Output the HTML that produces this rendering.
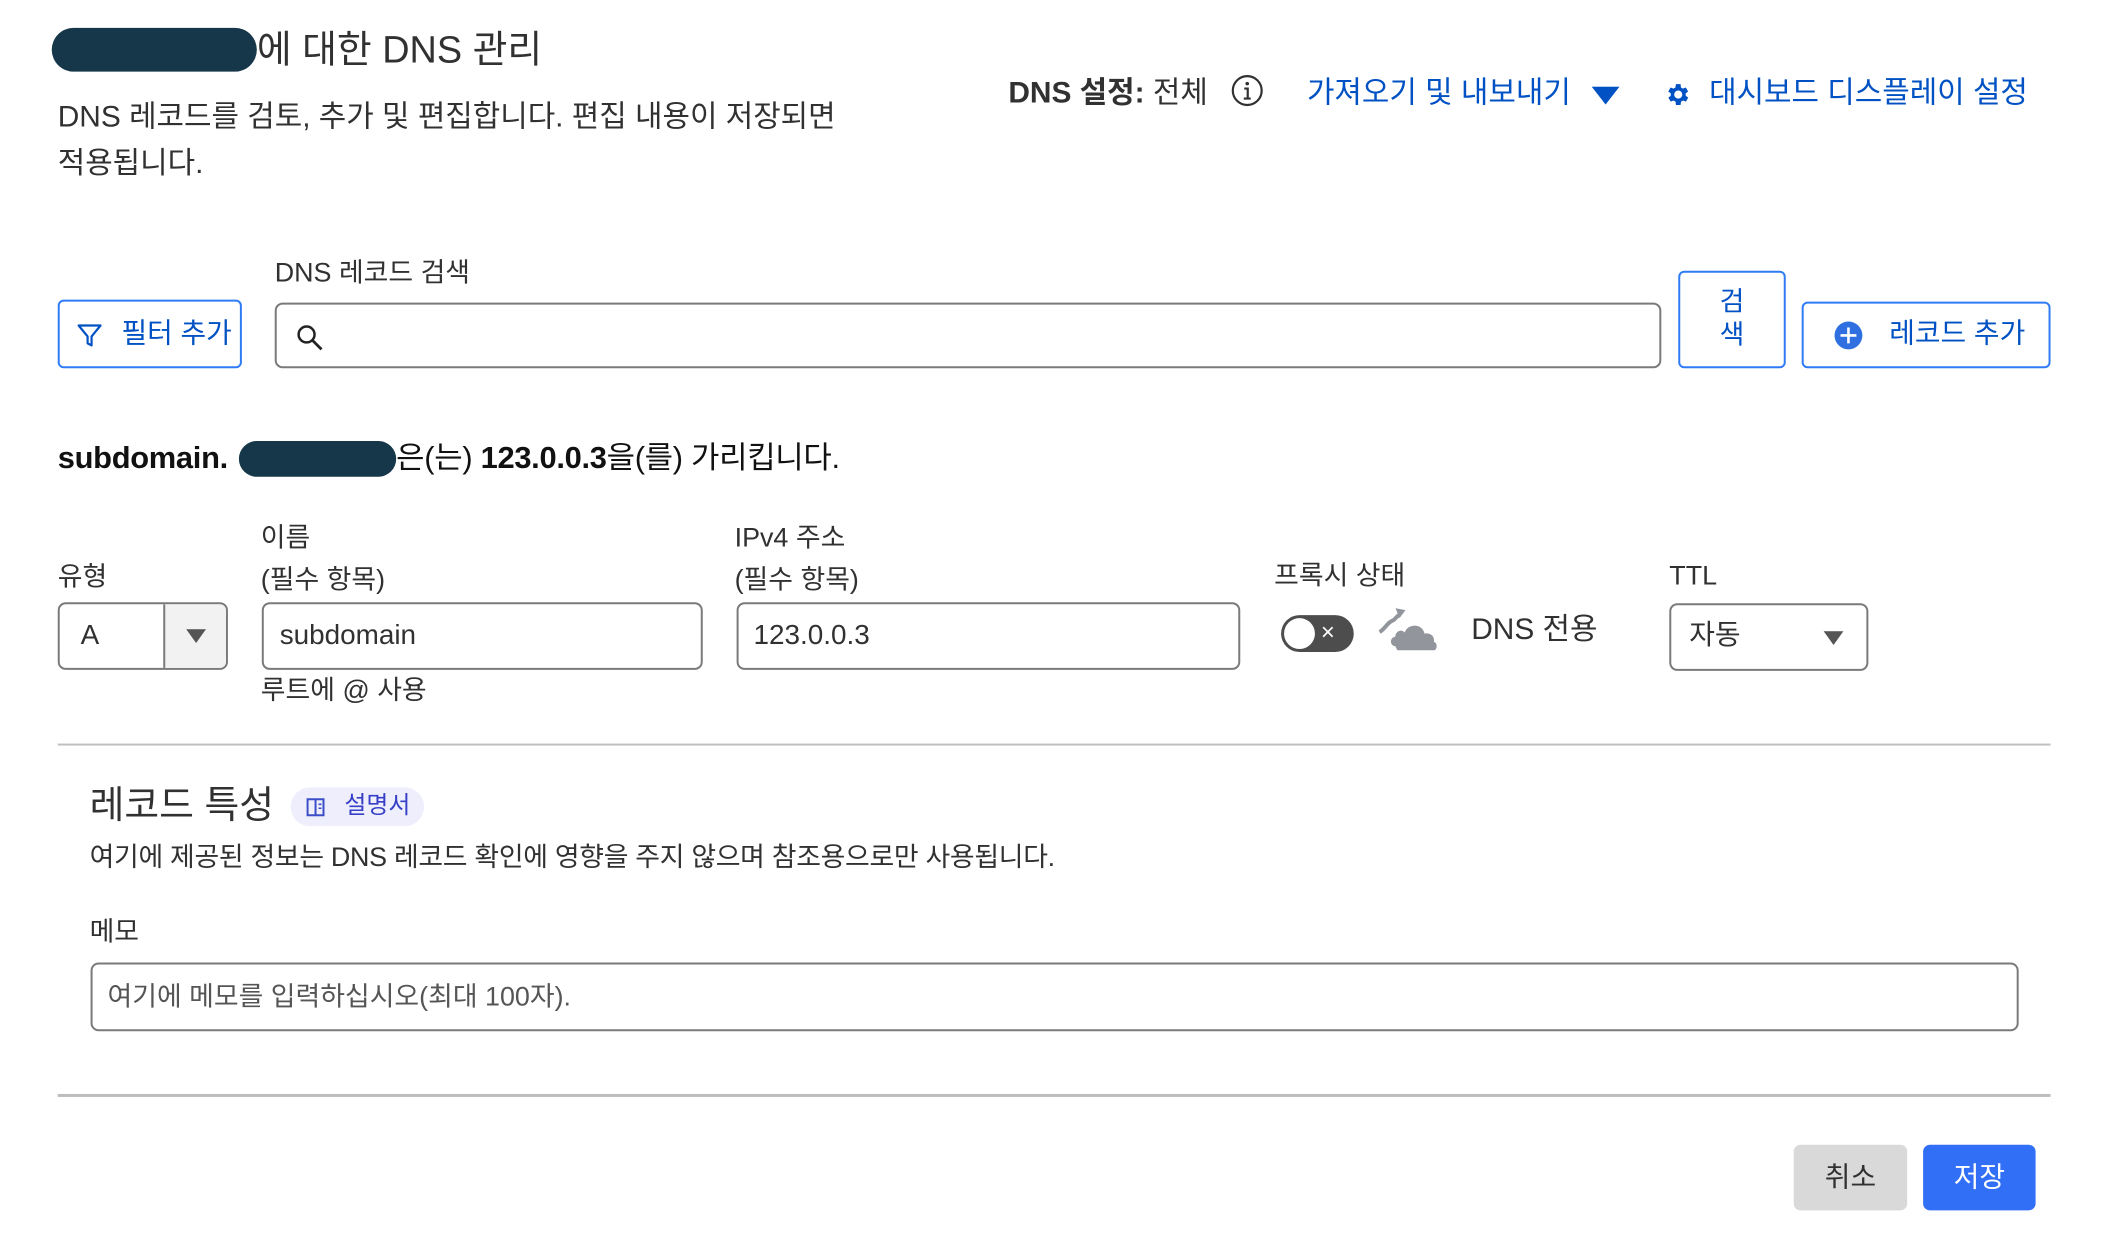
<!DOCTYPE html>
<html><head><meta charset="utf-8"><style>
*{box-sizing:border-box;margin:0;padding:0}
body{width:2106px;height:1238px;background:#fff;position:relative;overflow:hidden;font-family:"Liberation Sans","Noto Sans CJK KR",sans-serif;color:#313131}
#w{position:absolute;left:0;top:0;width:2106px;height:1238px;transform:scale(0.9954);transform-origin:0 0}
.a{position:absolute;white-space:nowrap}
.blue{color:#0051c3}
.box{position:absolute;border:2px solid #7a7a7a;border-radius:8px;background:#fff}
.bbtn{position:absolute;border:2px solid #2f7bf5;border-radius:6px;color:#0051c3;background:#fff}
.pill{position:absolute;background:#163749;border-radius:22px}
</style></head><body><div id="w">

<div class="pill" style="left:52px;top:28px;width:206px;height:44px"></div>
<div class="a" style="left:258px;top:27px;font-size:38px;line-height:48px">에 대한 DNS 관리</div>
<div class="a" style="left:58px;top:94px;font-size:30px;line-height:47px">DNS 레코드를 검토, 추가 및 편집합니다. 편집 내용이 저장되면<br>적용됩니다.</div>

<div class="a" style="left:1013px;top:75px;font-size:30px;line-height:38px"><b>DNS 설정:</b> 전체</div>
<svg class="a" style="left:1236px;top:74px" width="34" height="34" viewBox="0 0 34 34"><circle cx="17" cy="17" r="14.5" fill="none" stroke="#313131" stroke-width="2.2"/><circle cx="17" cy="10" r="1.8" fill="#313131"/><path d="M14 15h3.5v10M13.5 25h7" stroke="#313131" stroke-width="2.2" fill="none"/></svg>
<div class="a blue" style="left:1313px;top:75px;font-size:30px;line-height:38px">가져오기 및 내보내기</div>
<svg class="a" style="left:1599px;top:87px" width="28" height="18"><path d="M0 0h28L14 18z" fill="#0051c3"/></svg>
<svg class="a" style="left:1672px;top:81px" width="28" height="28" viewBox="0 0 24 24"><path fill="#0051c3" d="M19.4 13a7.5 7.5 0 000-2l2.1-1.6-2-3.5-2.5 1a7 7 0 00-1.7-1L15 3h-4l-.4 2.9a7 7 0 00-1.7 1l-2.5-1-2 3.5L6.6 11a7.5 7.5 0 000 2l-2.1 1.6 2 3.5 2.5-1a7 7 0 001.7 1L11 21h4l.4-2.9a7 7 0 001.7-1l2.5 1 2-3.5zM13 15.5a3.5 3.5 0 110-7 3.5 3.5 0 010 7z" transform="translate(-1 0)"/></svg>
<div class="a blue" style="left:1717px;top:75px;font-size:30px;line-height:38px">대시보드 디스플레이 설정</div>

<div class="a" style="left:276px;top:257px;font-size:27px;line-height:34px">DNS 레코드 검색</div>
<div class="bbtn" style="left:58px;top:301px;width:185px;height:69px"></div>
<svg class="a" style="left:76px;top:323px" width="28" height="28" viewBox="0 0 28 28"><path d="M3 4h22l-9 11v9l-4-2v-7z" fill="none" stroke="#0051c3" stroke-width="2.2" stroke-linejoin="round"/></svg>
<div class="a blue" style="left:122px;top:317px;font-size:28px;line-height:36px">필터 추가</div>
<div class="box" style="left:276px;top:304px;width:1393px;height:66px"></div>
<svg class="a" style="left:296px;top:324px" width="32" height="32" viewBox="0 0 32 32"><circle cx="12" cy="12" r="8" fill="none" stroke="#222" stroke-width="2.5"/><path d="M18 18l9 9" stroke="#222" stroke-width="2.8"/></svg>
<div class="bbtn" style="left:1686px;top:272px;width:108px;height:98px"></div>
<div class="a blue" style="left:1686px;top:287px;width:108px;text-align:center;font-size:27px;line-height:33px">검<br>색</div>
<div class="bbtn" style="left:1810px;top:303px;width:250px;height:67px"></div>
<svg class="a" style="left:1842px;top:322px" width="30" height="30" viewBox="0 0 30 30"><circle cx="15" cy="15" r="14" fill="#2f6fe0"/><path d="M15 7v16M7 15h16" stroke="#fff" stroke-width="2.6"/></svg>
<div class="a blue" style="left:1898px;top:317px;font-size:28px;line-height:36px">레코드 추가</div>

<div class="a" style="left:58px;top:440px;font-size:31px;line-height:40px;color:#111;letter-spacing:-0.3px"><b>subdomain.</b></div>
<div class="pill" style="left:240px;top:443px;width:158px;height:36px"></div>
<div class="a" style="left:398px;top:440px;font-size:31px;line-height:40px;color:#111;letter-spacing:-0.3px">은(는) <b>123.0.0.3</b>을(를) 가리킵니다.</div>

<div class="a" style="left:58px;top:562px;font-size:27px;line-height:34px">유형</div>
<div class="a" style="left:262px;top:519px;font-size:27px;line-height:42px">이름<br>(필수 항목)</div>
<div class="a" style="left:738px;top:519px;font-size:27px;line-height:42px">IPv4 주소<br>(필수 항목)</div>
<div class="a" style="left:1280px;top:561px;font-size:27px;line-height:34px">프록시 상태</div>
<div class="a" style="left:1677px;top:561px;font-size:27px;line-height:34px">TTL</div>

<div class="box" style="left:58px;top:605px;width:171px;height:68px;overflow:hidden"><div style="position:absolute;left:104px;top:0;width:65px;height:66px;background:#f2f2f2;border-left:2px solid #7a7a7a"></div></div>
<div class="a" style="left:81px;top:620px;font-size:28px;line-height:36px">A</div>
<svg class="a" style="left:187px;top:632px" width="20" height="14"><path d="M0 0h20L10 14z" fill="#555"/></svg>
<div class="box" style="left:263px;top:605px;width:443px;height:68px"></div>
<div class="a" style="left:281px;top:620px;font-size:28px;line-height:36px">subdomain</div>
<div class="a" style="left:262px;top:676px;font-size:27px;line-height:34px">루트에 @ 사용</div>
<div class="box" style="left:740px;top:605px;width:506px;height:68px"></div>
<div class="a" style="left:757px;top:620px;font-size:28px;line-height:36px">123.0.0.3</div>

<div class="a" style="left:1287px;top:618px;width:73px;height:37px;border-radius:19px;background:#4d4d4d"></div>
<div class="a" style="left:1290px;top:621px;width:31px;height:31px;border-radius:50%;background:#fff"></div>
<div class="a" style="left:1327px;top:618px;font-size:24px;line-height:36px;color:#fff">×</div>
<svg class="a" style="left:1384px;top:607px" width="70" height="50" viewBox="0 0 70 50"><path d="M14 42c-5 0-6-8 0-9 0-5 6-8 9-4 3-9 17-9 19 1 6-1 10 3 9 8 4 1 3 8 0 8H16z" fill="#92969c" transform="translate(3 -2) scale(1.05)"/><path d="M2 28c6-4 8-10 14-12l6-6" fill="none" stroke="#92969c" stroke-width="4"/><path d="M18 4l10 2-6 8z" fill="#92969c"/></svg>
<div class="a" style="left:1478px;top:614px;font-size:30px;line-height:38px">DNS 전용</div>

<div class="box" style="left:1677px;top:606px;width:200px;height:68px"></div>
<div class="a" style="left:1697px;top:620px;font-size:28px;line-height:36px">자동</div>
<svg class="a" style="left:1832px;top:634px" width="20" height="14"><path d="M0 0h20L10 14z" fill="#555"/></svg>

<div class="a" style="left:58px;top:747px;width:2002px;height:2px;background:#c0c0c0"></div>

<div class="a" style="left:90px;top:786px;font-size:38px;line-height:48px">레코드 특성</div>
<div class="a" style="left:292px;top:791px;width:134px;height:39px;border-radius:20px;background:#eeeefc"></div>
<svg class="a" style="left:306px;top:800px" width="24" height="22" viewBox="0 0 24 22"><path d="M3 3h8v16H3zM11 3h8v16h-8z" fill="none" stroke="#3b4ec8" stroke-width="2"/><path d="M14 8h3M14 12h3" stroke="#3b4ec8" stroke-width="1.6"/></svg>
<div class="a" style="left:346px;top:794px;font-size:24px;line-height:32px;color:#3640c6">설명서</div>
<div class="a" style="left:90px;top:844px;font-size:27px;line-height:34px;letter-spacing:-0.3px">여기에 제공된 정보는 DNS 레코드 확인에 영향을 주지 않으며 참조용으로만 사용됩니다.</div>
<div class="a" style="left:90px;top:919px;font-size:27px;line-height:34px">메모</div>
<div class="box" style="left:91px;top:967px;width:1937px;height:69px"></div>
<div class="a" style="left:108px;top:983px;font-size:27px;line-height:36px;color:#555">여기에 메모를 입력하십시오(최대 100자).</div>

<div class="a" style="left:58px;top:1099px;width:2002px;height:3px;background:#bdbdbd"></div>

<div class="a" style="left:1802px;top:1150px;width:114px;height:66px;border-radius:7px;background:#d9d9d9;font-size:28px;line-height:66px;text-align:center;color:#313131">취소</div>
<div class="a" style="left:1932px;top:1150px;width:113px;height:66px;border-radius:7px;background:#316ff6;font-size:28px;line-height:66px;text-align:center;color:#fff">저장</div>
</div></body></html>
